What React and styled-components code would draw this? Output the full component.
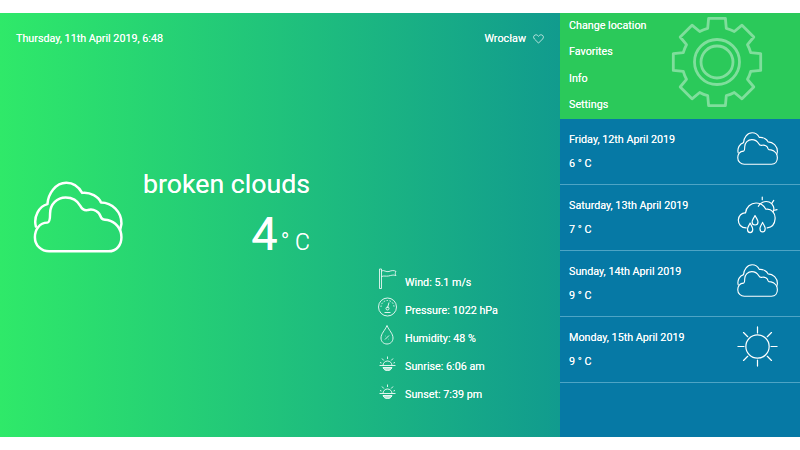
import React from "react";
import styled, { createGlobalStyle } from "styled-components";

const Global = createGlobalStyle`
  html, body { margin: 0; padding: 0; background: #fff; }
  body { font-family: Roboto, "Liberation Sans", sans-serif; }
`;

const Page = styled.div`
  width: 800px; height: 450px; padding: 13px 0; box-sizing: border-box; background: #fff; overflow: hidden;
`;
const Frame = styled.div`
  display: flex; width: 800px; height: 424px; color: #fff; text-shadow: 0 0 .6px rgba(255,255,255,.8);
`;
const Main = styled.main`
  width: 560px; flex: none; display: flex; flex-direction: column;
  background: linear-gradient(90deg, #2fe969 0%, #119b8e 100%);
  padding: 18px 16px 0; box-sizing: border-box;
`;
const Header = styled.header`
  display: flex; justify-content: space-between; align-items: center; height: 16px; font-size: 10.75px; line-height: 16px;
`;
const City = styled.div`
  display: flex; align-items: center; gap: 7px;
`;
const Hero = styled.section`
  display: flex; margin-top: 121px; padding-left: 16.5px; align-items: flex-start;
`;
const HeroIcon = styled.svg`
  width: 90px; height: 72px; margin-top: 13px; flex: none; display: block;
`;
const HeroText = styled.div`
  margin-left: 20px; width: 167.5px; display: flex; flex-direction: column; align-items: flex-end;
`;
const Summary = styled.div`
  font-size: 26.7px; line-height: 32px; white-space: nowrap;
`;
const Temp = styled.div`
  display: flex; align-items: baseline; margin-top: 9px; line-height: 50px; font-size: 47px;
`;
const Unit = styled.span`
  font-size: 23px; font-weight: 300; margin-left: 3px;
`;
const Details = styled.ul`
  list-style: none; margin: 2px 0 0 362px; padding: 0; display: flex; flex-direction: column; gap: 4.2px;
`;
const Detail = styled.li`
  display: flex; align-items: center; height: 24px; gap: 8px; font-size: 10.75px;
`;
const DetailIcon = styled.svg`
  width: 19px; height: 22px; flex: none; display: block; position: relative; top: -3px;
`;
const Side = styled.aside`
  width: 240px; flex: none; display: flex; flex-direction: column; background: #0679a5;
`;
const Menu = styled.nav`
  position: relative; height: 106px; background: #2bc95a; padding: 1.3px 9px 0; box-sizing: border-box;
  display: flex; flex-direction: column; overflow: hidden;
`;
const MenuItem = styled.div`
  font-size: 10.75px; height: 26.8px; line-height: 24px;
`;
const Gear = styled.svg`
  position: absolute; left: 111px; top: 3px; width: 92px; height: 92px;
`;
const Day = styled.div`
  display: flex; align-items: center; justify-content: space-between; height: 65px; margin-bottom: 1px;
  padding: 0 22px 0 9px; box-shadow: 0 1px 0 #4ea4c5; font-size: 10.75px;
`;
const DayInfo = styled.div`
  display: flex; flex-direction: column; gap: 9px; line-height: 15px;
`;
const DayIcon = styled.svg`
  width: 41px; height: ${(p) => p.$h}px; margin-bottom: 6px; display: block; flex: none;
`;

const cloudBack = "M105 680 C97 650 115 618 140 612 C142 580 165 547 197 547 C222 547 238 565 245 578 C270 575 295 590 302 607 C335 607 365 635 364 672 L360 690";
const cloudFront = "M140 668 C115 668 102 690 102 712 C102 738 122 755 145 755 H325 C350 755 364 735 364 712 C364 685 345 665 322 660 C312 660 305 658 302 652 C298 635 280 625 262 630 C250 632 245 628 240 618 C230 600 212 592 195 592 C170 592 148 612 148 640 C148 655 146 668 140 668 Z";

const Cloud = ({ w }) => (
  <g fill="none" stroke="#fff" strokeWidth={w} strokeLinecap="round" strokeLinejoin="round">
    <path d={cloudBack} />
    <path d={cloudFront} />
  </g>
);
const cloudBox = "97 542 271 218";

const gearPath = (() => {
  const cx = 46, cy = 46, n = 8, R = 44.5, r = 35;
  let d = "";
  for (let i = 0; i < n; i++) {
    const a = (i * 2 * Math.PI) / n - Math.PI / 2;
    const pt = (rad, off) => {
      const x = cx + rad * Math.cos(a + off);
      const y = cy + rad * Math.sin(a + off);
      return `${x.toFixed(1)} ${y.toFixed(1)}`;
    };
    d += `${i === 0 ? "M" : "L"}${pt(r, -0.27)} L${pt(R, -0.19)} L${pt(R, 0.19)} L${pt(r, 0.27)} A${r} ${r} 0 0 1 ${pt(r, Math.PI / 4 - 0.27)} `;
  }
  return d + "Z";
})();

const Sun = () => (
  <DayIcon $h={41} viewBox="0 0 44 44" fill="none" stroke="#fff" strokeWidth="1.3" strokeLinecap="round">
    <circle cx="22" cy="22" r="12.5" />
    <path d="M22 1V7.5M22 36.5V43M1 22H7.5M36.5 22H43M7 7L11.5 11.5M32.5 32.5L37 37M37 7L32.5 11.5M11.5 32.5L7 37" />
  </DayIcon>
);
const Rain = () => (
  <DayIcon $h={38} viewBox="50 225 125 115" fill="none" stroke="#fff" strokeWidth="3.6" strokeLinecap="round" strokeLinejoin="round">
    <path d="M78 322C62 322 54 310 54 298C54 285 65 275 76 276C78 258 92 246 108 246C120 246 132 254 138 265C155 262 168 278 166 295C165 310 155 320 142 322" />
    <path d="M115 256C120 245 135 238 148 243C160 248 166 262 160 273" />
    <path d="M127 228V236M162 238L156 247M172 266L164 268" />
    <path d="M105 284C100 294 96 298 96 304C96 310 100 313 105 313C110 313 114 310 114 304C114 298 110 294 105 284Z" />
    <path d="M90 307C86 316 82 319 82 326C82 332 86 336 90 336C94 336 98 332 98 326C98 319 94 316 90 307Z" />
    <path d="M128 305C124 314 120 317 120 324C120 330 124 334 128 334C132 334 136 330 136 324C136 317 132 314 128 305Z" />
  </DayIcon>
);
const SmallCloud = () => (
  <DayIcon $h={33} viewBox={cloudBox}><Cloud w="7.5" /></DayIcon>
);

const Wind = () => (
  <DetailIcon viewBox="0 0 19 22" fill="none" stroke="#fff" strokeOpacity=".8" strokeWidth="1">
    <path d="M1.5 1V20.5H3.5V1Z" />
    <path d="M3.5 3C6 1.5 8 4.5 11 3.5C13.5 2.5 16 2 18 3.5C17 5 17 6 18 7.5C15 6.5 13 7.5 10.5 8C8 8.5 6 7.5 3.5 8.5" />
  </DetailIcon>
);
const Pressure = () => (
  <DetailIcon viewBox="0 0 19 22" fill="none" stroke="#fff" strokeOpacity=".85" strokeWidth="1">
    <circle cx="9.5" cy="11" r="9" />
    <path d="M3 11A6.5 6.5 0 0 1 16 11" strokeDasharray="1.5 1.5" />
    <path d="M9.5 12L11 6.5M6.5 16.5H12.5" />
    <circle cx="9.5" cy="12.5" r="1.5" />
  </DetailIcon>
);
const Humidity = () => (
  <DetailIcon viewBox="0 0 19 22" fill="none" stroke="#fff" strokeOpacity=".85" strokeWidth="1">
    <path d="M9 1.5C7 6.5 3 9.5 3 14C3 17.5 5.5 20 9 20C12.5 20 15 17.5 15 14C15 9.5 11 6.5 9 1.5Z" />
    <path d="M7 15.5L11 11.5M7.3 12H7.7M10.5 15.2H10.9" />
  </DetailIcon>
);
const SunRise = () => (
  <DetailIcon viewBox="0 0 19 22" fill="none" stroke="#fff" strokeOpacity=".85" strokeWidth="1">
    <path d="M1.5 12.5H17.5M5 12.5C5 10 7 8 9.5 8C12 8 14 10 14 12.5" />
    <path d="M5 14.5H14C13 17 11.5 17.5 9.5 17.5C7.5 17.5 6 17 5 14.5Z" fill="#fff" fillOpacity=".7" />
    <path d="M9.5 3.5V6M4 5.5L5.8 7.5M15 5.5L13.2 7.5M2 9.5L3.5 10M17 9.5L15.5 10" />
  </DetailIcon>
);

const days = [
  ["Friday, 12th April 2019", "6 ° C", <SmallCloud />],
  ["Saturday, 13th April 2019", "7 ° C", <Rain />],
  ["Sunday, 14th April 2019", "9 ° C", <SmallCloud />],
  ["Monday, 15th April 2019", "9 ° C", <Sun />],
];
const details = [
  [<Wind />, "Wind: 5.1 m/s"],
  [<Pressure />, "Pressure: 1022 hPa"],
  [<Humidity />, "Humidity: 48 %"],
  [<SunRise />, "Sunrise: 6:06 am"],
  [<SunRise />, "Sunset: 7:39 pm"],
];

export default function App() {
  return (
    <Page>
      <Global />
      <Frame>
        <Main>
          <Header>
            <span>Thursday, 11th April 2019, 6:48</span>
            <City>
              <span>Wrocław</span>
              <svg width="11" height="10" viewBox="0 0 24 22" fill="none" stroke="#fff" strokeOpacity=".85" strokeWidth="1.8">
                <path d="M12 20L3 11C0 8 1 3 5 2C8 1 10 3 12 5C14 3 16 1 19 2C23 3 24 8 21 11Z" />
              </svg>
            </City>
          </Header>
          <Hero>
            <HeroIcon viewBox={cloudBox}><Cloud w="7.5" /></HeroIcon>
            <HeroText>
              <Summary>broken clouds</Summary>
              <Temp>4<Unit>° C</Unit></Temp>
            </HeroText>
          </Hero>
          <Details>
            {details.map(([icon, text]) => (
              <Detail key={text}>{icon}<span>{text}</span></Detail>
            ))}
          </Details>
        </Main>
        <Side>
          <Menu>
            {["Change location", "Favorites", "Info", "Settings"].map((m) => <MenuItem key={m}>{m}</MenuItem>)}
            <Gear viewBox="0 0 92 92" fill="none" stroke="#fff" strokeOpacity=".4" strokeWidth="2.8" strokeLinejoin="round">
              <path d={gearPath} />
              <circle cx="46" cy="46" r="22.5" />
              <circle cx="46" cy="46" r="16" />
            </Gear>
          </Menu>
          {days.map(([d, t, icon]) => (
            <Day key={d}>
              <DayInfo><span>{d}</span><span>{t}</span></DayInfo>
              {icon}
            </Day>
          ))}
        </Side>
      </Frame>
    </Page>
  );
}
